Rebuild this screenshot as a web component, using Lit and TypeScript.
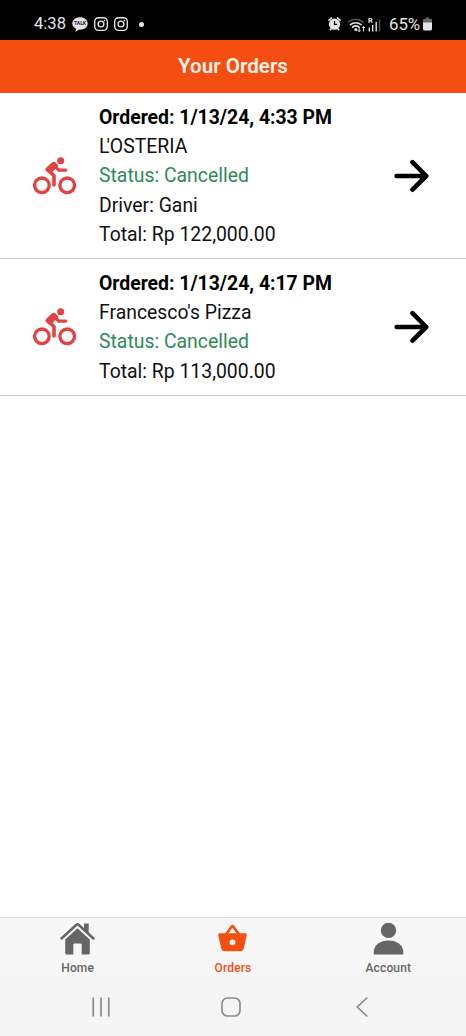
import { LitElement, html, svg, css } from "lit";
import { customElement, property } from "lit/decorators.js";

interface Order {
  date: string;
  restaurant: string;
  status: string;
  driver?: string;
  total: string;
}

const orders: Order[] = [
  { date: "1/13/24, 4:33 PM", restaurant: "L'OSTERIA", status: "Cancelled", driver: "Gani", total: "Rp 122,000.00" },
  { date: "1/13/24, 4:17 PM", restaurant: "Francesco's Pizza", status: "Cancelled", total: "Rp 113,000.00" },
];

const camera = html`<svg class="camera" width="14" height="14" viewBox="0 0 14 14" fill="none" stroke="#e4e4e4" stroke-width="1.35">
  <rect x=".7" y=".7" width="12.6" height="12.6" rx="3.8" />
  <circle cx="7" cy="7" r="2.9" />
  <circle cx="10.5" cy="3.5" r=".85" fill="#e4e4e4" stroke="none" />
</svg>`;

@customElement("status-bar")
class StatusBar extends LitElement {
  static styles = css`
    :host { display: flex; align-items: center; height: 40px; box-sizing: border-box; padding: 8px 34px 0 34px; background: #000; color: #e4e4e4; font-size: 16.6px; line-height: 20px; }
    svg { display: block; flex: none; }
    .time { width: 38px; }
    .time, .percent { position: relative; top: -.5px; white-space: nowrap; }
    .camera { margin-left: 6px; }
    .talk { font: 700 5px Roboto, sans-serif; }
    .dot { width: 5px; height: 5px; border-radius: 50%; background: #e4e4e4; margin-left: 11px; }
    .spacer { flex: 1; }
    .signal { font: 700 7.5px Roboto, sans-serif; }
    .percent { margin-left: 6px; width: 34px; font-size: 16.8px; }
  `;
  render() {
    return html`
      <span class="time">4:38</span>
      <svg width="16" height="15" viewBox="0 0 16 15">
        <path fill="#e4e4e4" d="M8 .3C12.3.3 15.7 3 15.7 6.5S12.3 12.7 8 12.7l-1-.1L3.4 15l.7-3.2C1.8 10.700.3 8.700.3 6.500.3 3 3.700.3 8 .3Z" />
        <text class="talk" x="8" y="8.400" text-anchor="middle" fill="#222">TALK</text>
      </svg>
      ${camera}${camera}
      <span class="dot"></span>
      <span class="spacer"></span>
      <svg width="13" height="14" viewBox="0 0 13 14">
        <path d="M.9 3.200 3.600.9M12.100 3.200 9.400.9M2.300 12.800 3.600 11.500M10.700 12.800 9.400 11.500" stroke="#e4e4e4" stroke-width="1.600" stroke-linecap="round" />
        <circle cx="6.500" cy="7.200" r="5.600" fill="#e4e4e4" />
        <path d="M6.500 4v3.400h2.700" fill="none" stroke="#000" stroke-width="1.200" />
      </svg>
      <svg class="signal" width="42" height="17" viewBox="0 0 42 17">
        <g fill="none" stroke="#e4e4e4" stroke-width="1.700" stroke-linecap="round">
          <path d="M7.500 6C11.500 2.300 18 2.300 22 6" stroke="#555" />
          <path d="M9.500 8.600c3-2.500 7.500-2.500 10.500 0M11.600 11.200c2-1.500 4.400-1.500 6.300 0" />
        </g>
        <circle cx="14.800" cy="13.500" r="1.500" fill="#e4e4e4" />
        <path d="M18.200 11v4.600m-1.500-1.500 1.500 1.500 1.500-1.500M22.500 15.500V10.500m-1.500 1.500 1.500-1.500L24 12" stroke="#e4e4e4" fill="none" />
        <text x="27" y="7.200" fill="#e4e4e4">R</text>
        <path d="M28.300 11.500v4M31.700 9v6.500M35.200 6v9.500" stroke="#e4e4e4" stroke-width="1.400" />
        <path d="M38.500 3.500v12" stroke="#555" stroke-width="1.400" />
      </svg>
      <span class="percent">65%</span>
      <svg width="9" height="14" viewBox="0 0 9 14">
        <path d="M3 .5h3v1.300h1.500Q9 1.800 9 3v3H0V3q0-1.200 1.500-1.200H3Z" fill="#666" />
        <path d="M0 5.500h9V12q0 1.500-1.500 1.500h-6Q0 13.500 0 12Z" fill="#e4e4e4" />
      </svg>
    `;
  }
}

@customElement("order-row")
class OrderRow extends LitElement {
  @property({ attribute: false }) order!: Order;
  static styles = css`
    :host { display: flex; align-items: center; box-sizing: border-box; padding: 10.300px 37px 9.200px 33px; border-bottom: 1px solid #c8c8c8; }
    svg { display: block; flex: none; }
    .details { flex: 1; margin-left: 23px; font-size: 19.4px; line-height: 29.1px; color: #111; white-space: nowrap; }
    .date { font-weight: 700; color: #000; }
    .state { color: #2e8b57; }
    .kern { letter-spacing: -3px; }
  `;
  // Tightens the gap between a leading "L" and the apostrophe after it.
  private name(n: string) {
    return n.startsWith("L'") ? html`<span class="kern">L</span>${n.slice(1)}` : n;
  }
  render() {
    const o = this.order;
    return html`
      <svg width="43" height="38" viewBox="0 0 43 38">
        <g fill="none" stroke="#e34242">
          <circle cx="8.900" cy="28.300" r="7.300" stroke-width="3.300" />
          <circle cx="34.200" cy="28.300" r="7.300" stroke-width="3.300" />
          <path d="m16 13.500 5 5.200v9.300" stroke-width="3.600" stroke-linejoin="round" stroke-linecap="round" />
          <path d="m20.500 7.700 5.200 5.400h7" stroke-width="3.300" stroke-linejoin="round" stroke-linecap="round" />
        </g>
        <path d="M13.500 10.500 18.500 5.800q2.300-1.900 4.500.1l2.500 2.800-5.700 5.800-2.500 3-4-3.200q-1.900-1.800.2-3.800Z" fill="#e34242" />
        <circle cx="27.700" cy="3.700" r="3.500" fill="#e34242" />
      </svg>
      <div class="details">
        <div class="date">Ordered: ${o.date}</div>
        <div>${this.name(o.restaurant)}</div>
        <div class="state">Status: ${o.status}</div>
        ${o.driver ? html`<div>Driver: ${o.driver}</div>` : ""}
        <div>Total: ${o.total}</div>
      </div>
      <svg width="35" height="34" viewBox="0 0 35 34" fill="none" stroke="#000" stroke-width="4.600" stroke-linecap="round" stroke-linejoin="round">
        <path d="M2.700 17H32.200M18.500 3.200 32.200 17 18.500 30.700" />
      </svg>
    `;
  }
}

const tabs = [
  {
    label: "Home",
    icon: svg`<path d="M1.500 17.500 16.200 4q1.300-1.200 2.600 0l14.700 13.500" fill="none" stroke="currentColor" stroke-width="2.500" stroke-linecap="round"/>
      <path d="M24 2.400h4.700v9.900l-4.700-4.300ZM17.500 7.200 29.800 18.500V32q0 1.500-1.500 1.500h-6.600V24q0-1.400-1.400-1.400h-5.600q-1.400 0-1.400 1.400v9.500H6.700q-1.500 0-1.500-1.500V18.500Z" fill="currentColor"/>`,
  },
  {
    label: "Orders",
    icon: svg`<path d="m11 13.500 6-8.200q.5-.7 1 0l6 8.200" fill="none" stroke="currentColor" stroke-width="2.600"/>
      <path d="M5 12.200h25q2.200 0 1.700 2.200l-3 13.100q-.6 2.700-3.400 2.700H9.700q-2.800 0-3.400-2.700l-3-13.100q-.5-2.200 1.700-2.200Z" fill="currentColor"/>
      <circle cx="17.500" cy="21.300" r="2.900" fill="#f7f7f7"/>`,
  },
  {
    label: "Account",
    icon: svg`<circle cx="17.500" cy="9.400" r="7.700" fill="currentColor"/>
      <path d="M2.700 33.500q-1-10.200 9-13.200 5.800-1.500 11.600 0 10 3 9 13.200Z" fill="currentColor"/>`,
  },
];

@customElement("tab-bar")
class TabBar extends LitElement {
  static styles = css`
    :host { display: grid; grid-template-columns: repeat(3, 1fr); height: 60px; box-sizing: border-box; border-top: 1px solid #ddd; background: #f7f7f7; }
    .tab { display: flex; flex-direction: column; align-items: center; padding-top: 3px; color: #656565; font-size: 12px; font-weight: 500; line-height: 16px; letter-spacing: .15px; }
    .active { color: #f54e13; }
    svg { display: block; margin-bottom: 4px; }
  `;
  render() {
    return tabs.map((t) => html`
      <div class="tab ${t.label === "Orders" ? "active" : ""}">
        <svg width="35" height="35" viewBox="0 0 35 35">${t.icon}</svg>
        <span>${t.label}</span>
      </div>`);
  }
}

@customElement("app-root")
class AppRoot extends LitElement {
  static styles = css`
    :host { display: flex; flex-direction: column; height: 1036px; background: #fff; font-family: Roboto, sans-serif; }
    .header { height: 53px; flex: none; box-sizing: border-box; padding-bottom: 2px; background: #f54e13; color: #fff3e8; display: flex; align-items: center; justify-content: center; font-size: 20.6px; font-weight: 600; }
    .list { flex: 1; }
    .system { height: 59px; flex: none; box-sizing: border-box; padding: 0 98px 0 92px; background: #f5f5f5; display: grid; grid-template-columns: 129px 1fr auto; align-items: center; }
    .system svg { display: block; fill: none; stroke: #8c8c8c; stroke-width: 1.700; stroke-linecap: round; }
  `;
  render() {
    return html`
      <status-bar></status-bar>
      <div class="header">Your Orders</div>
      <div class="list">${orders.map((o) => html`<order-row .order=${o}></order-row>`)}</div>
      <tab-bar></tab-bar>
      <div class="system">
        <svg width="18" height="20" viewBox="0 0 18 20"><path d="M1.200 1.200v17.600M9 1.200v17.600M16.800 1.200v17.600" /></svg>
        <svg width="20" height="20" viewBox="0 0 20 20"><rect x="1" y="1" width="18" height="18" rx="5.500" /></svg>
        <svg width="12" height="20" viewBox="0 0 12 20"><path d="M10.800 1 1.200 10l9.600 9" /></svg>
      </div>
    `;
  }
}
